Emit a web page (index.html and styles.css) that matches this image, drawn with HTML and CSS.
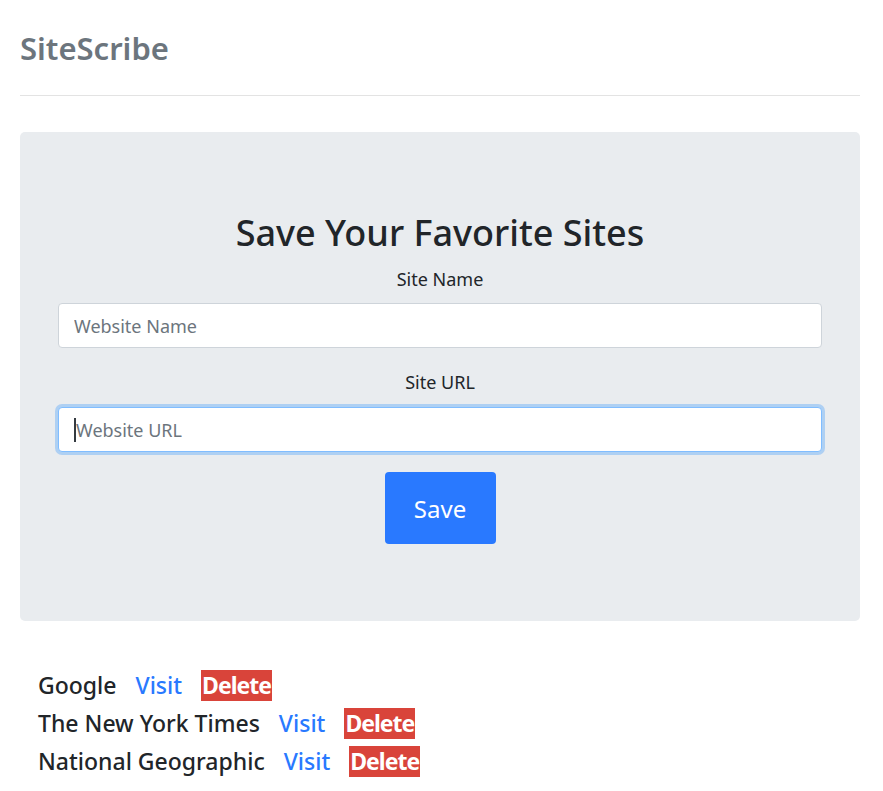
FILE: index.html
```html
<!DOCTYPE html>
<html lang="en">
<head>
<meta charset="utf-8">
<title>SiteScribe</title>
<link rel="stylesheet" href="styles.css">
</head>
<body>
<div class="page">
  <header class="header">
    <h1 class="brand">SiteScribe</h1>
  </header>
  <hr class="rule">
  <section class="jumbotron">
    <h2 class="title">Save Your Favorite Sites</h2>
    <form class="form">
      <div class="group">
        <label class="label" for="name">Site Name</label>
        <input class="control" id="name" type="text" placeholder="Website Name">
      </div>
      <div class="group">
        <label class="label" for="url">Site URL</label>
        <div class="control focus"><span class="caret"></span><span class="ph">Website URL</span></div>
      </div>
      <div class="actions">
        <button class="btn" type="button">Save</button>
      </div>
    </form>
  </section>
  <ul class="sites">
    <li class="site"><span class="site-name">Google</span><a class="visit" href="#">Visit</a><span class="delete">Delete</span></li>
    <li class="site"><span class="site-name">The New York Times</span><a class="visit" href="#">Visit</a><span class="delete">Delete</span></li>
    <li class="site"><span class="site-name">National Geographic</span><a class="visit" href="#">Visit</a><span class="delete">Delete</span></li>
  </ul>
</div>
</body>
</html>
```
FILE: styles.css
```css
* { box-sizing: border-box; }
body {
  margin: 0;
  font-family: "Noto Sans", "Open Sans", sans-serif;
  color: #212529;
  background: #fff;
}
.page { padding: 0 23px 0 20px; }
.header { padding-top: 30px; }
.brand {
  margin: 0;
  font-size: 31px;
  font-weight: 600;
  color: #6c757d;
  line-height: 1.2;
}
.rule {
  margin: 28px 0 36px;
  border: 0;
  border-top: 1px solid #e3e3e3;
}
.jumbotron {
  background: #e9ecef;
  border-radius: 5px;
  padding: 77px 38px 77px;
  text-align: center;
}
.title {
  margin: 0 0 10px;
  font-size: 36px;
  font-weight: 500;
  line-height: 48px;
}
.group { margin-bottom: 22px; }
.group + .group { margin-bottom: 20px; }
.label {
  display: block;
  font-size: 18px;
  line-height: 25px;
  margin-bottom: 11px;
}
.group + .group .label { margin-bottom: 12px; }
.control {
  display: flex;
  align-items: center;
  width: 100%;
  height: 45px;
  padding: 0 15px;
  font-family: inherit;
  font-size: 18px;
  color: #495057;
  background: #fff;
  border: 1px solid #ced4da;
  border-radius: 4px;
  text-align: left;
  outline: none;
}
.control::placeholder { color: #6c757d; }
.focus {
  border-color: #80bdff;
  box-shadow: 0 0 0 3px rgba(0, 123, 255, 0.25);
}
.ph { color: #6c757d; }
.caret {
  display: inline-block;
  width: 2px;
  height: 24px;
  background: #343a40;
}
.btn {
  width: 111px;
  height: 72px;
  background: #2979ff;
  color: #fff;
  border: 0;
  border-radius: 4px;
  font-family: inherit;
  font-size: 24px;
}
.sites {
  list-style: none;
  margin: 45px 0 0;
  padding: 0 0 0 18px;
}
.site {
  display: flex;
  align-items: center;
  gap: 19px;
  height: 38px;
  font-size: 23px;
  font-weight: 500;
}
.visit { color: #2979ff; text-decoration: none; }
.delete {
  background: #d9443a;
  color: #fff;
  font-weight: 700;
  padding: 0 1px;
  letter-spacing: -1px;
  line-height: 31px;
}
```
